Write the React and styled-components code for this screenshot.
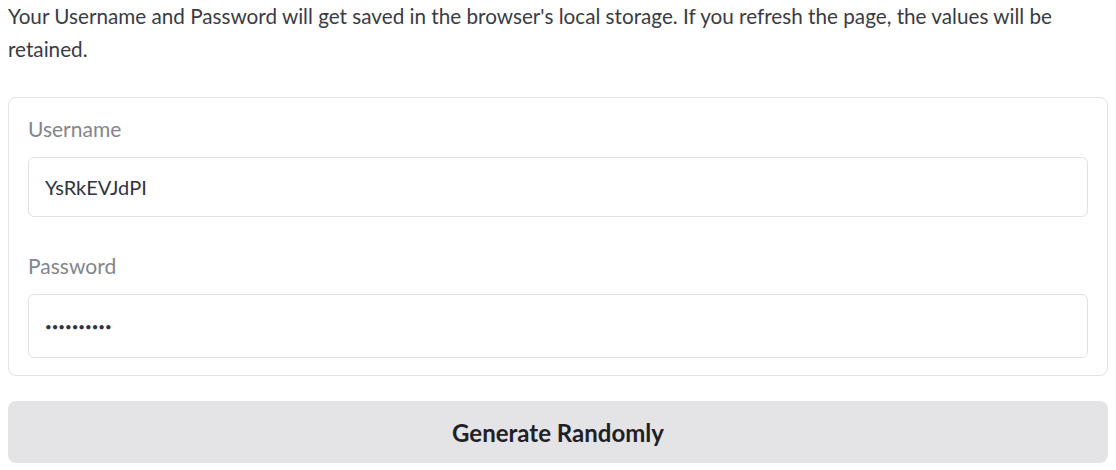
import React, { useState } from 'react';
import styled, { createGlobalStyle } from 'styled-components';

const GlobalStyle = createGlobalStyle`
  body {
    margin: 0;
    background: #ffffff;
    font-family: Lato, "Liberation Sans", sans-serif;
    color: #31333f;
  }
`;

const Page = styled.div`
  padding: 0 8px;
  width: 1100px;
`;

const Intro = styled.p`
  margin: 0 0 31px;
  font-size: 20.7px;
  line-height: 33px;
  color: #3a3b44;
`;

const Card = styled.div`
  border: 1px solid #e3e3e6;
  border-radius: 8px;
  padding: 16px 19px 17px;
  display: flex;
  flex-direction: column;
  gap: 34px;
`;

const Field = styled.label`
  display: flex;
  flex-direction: column;
  gap: 13px;
`;

const Label = styled.span`
  font-size: 21px;
  line-height: 30px;
  color: #84858c;
`;

const Input = styled.input`
  box-sizing: border-box;
  height: ${(p) => p.$h || 61}px;
  padding: 0 16px;
  border: 1px solid #e2e2e5;
  border-radius: 6px;
  font-family: inherit;
  font-size: ${(p) => (p.type === 'password' ? 11.5 : 20)}px;
  color: #31333f;
  outline: none;
  background: #fff;
`;

const Button = styled.button`
  margin-top: 25px;
  width: 100%;
  height: 62px;
  border: none;
  border-radius: 8px;
  background: #e4e4e6;
  font-family: inherit;
  font-size: 24px;
  font-weight: 700;
  color: #1f2026;
  cursor: pointer;
`;

export default function App() {
  const [username, setUsername] = useState('YsRkEVJdPI');
  const [password, setPassword] = useState('aB3dE6gH9j');

  return (
    <Page>
      <GlobalStyle />
      <Intro>
        Your Username and Password will get saved in the browser's local storage. If you refresh the page, the values will be
        retained.
      </Intro>
      <Card>
        <Field>
          <Label>Username</Label>
          <Input value={username} onChange={(e) => setUsername(e.target.value)} $h={60} />
        </Field>
        <Field>
          <Label>Password</Label>
          <Input type="password" value={password} onChange={(e) => setPassword(e.target.value)} $h={64} />
        </Field>
      </Card>
      <Button>Generate Randomly</Button>
    </Page>
  );
}
